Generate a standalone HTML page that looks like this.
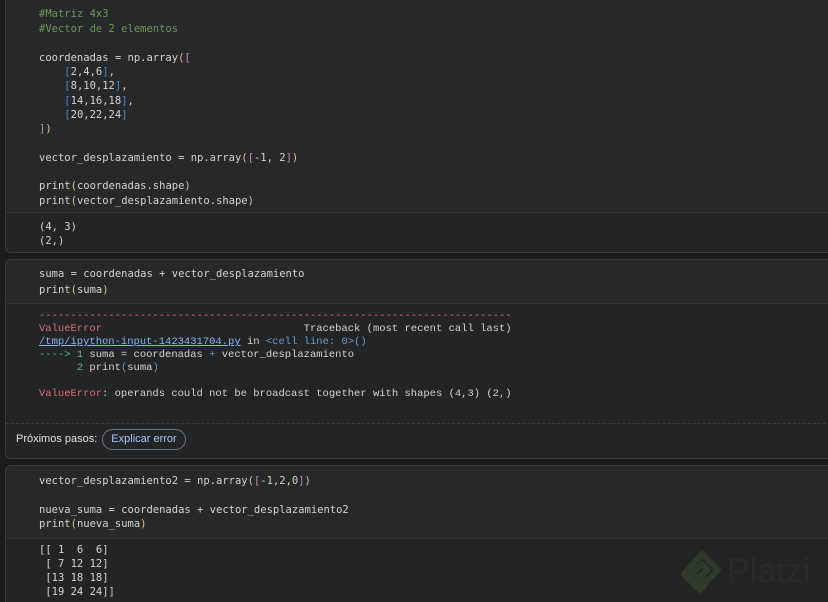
<!DOCTYPE html>
<html><head><style>
html,body{margin:0;width:828px;height:602px;overflow:hidden}
body{background:#1c1c1d;position:relative;font-family:"DejaVu Sans Mono",monospace;}
.cell{position:absolute;left:5px;width:840px;border:1px solid #3a3b3d;border-radius:6px;background:#232425;overflow:hidden}
.code{background:#27282a;border-bottom:1px solid #333436;position:relative}
.l{position:absolute;left:33px;font-size:10.5px;color:#d4d4d4;white-space:pre;line-height:14px}
.m{font-family:"Liberation Mono",monospace;font-size:10.5px}
.c{color:#6a9955}.y{color:#e5c07b}.p{color:#c586c0}.b{color:#3d8fd6}.n{color:#b5cea8}
.r{color:#e06c75}.g{color:#56b69a}.u{color:#8ab4f8;text-decoration:underline}.bl{color:#6c9bd2}
</style></head><body>
<div class="cell" style="top:-10px;height:261px">
<div class="code" style="height:221px">
<div class="l c" style="top:16px">#Matriz 4x3</div>
<div class="l c" style="top:31px">#Vector de 2 elementos</div>
<div class="l" style="top:60px">coordenadas = np.array<span class="y">(</span><span class="p">[</span></div>
<div class="l" style="top:74px">    <span class="b">[</span>2,4,6<span class="b">]</span>,</div>
<div class="l" style="top:88px">    <span class="b">[</span>8,10,12<span class="b">]</span>,</div>
<div class="l" style="top:103px">    <span class="b">[</span>14,16,18<span class="b">]</span>,</div>
<div class="l" style="top:117px">    <span class="b">[</span>20,22,24<span class="b">]</span></div>
<div class="l" style="top:131px"><span class="p">]</span><span class="y">)</span></div>
<div class="l" style="top:160px">vector_desplazamiento = np.array<span class="y">(</span><span class="p">[</span>-1, 2<span class="p">]</span><span class="y">)</span></div>
<div class="l" style="top:188px">print<span class="y">(</span>coordenadas.shape<span class="y">)</span></div>
<div class="l" style="top:203px">print<span class="y">(</span>vector_desplazamiento.shape<span class="y">)</span></div>
</div>
<div class="l" style="top:229px">(4, 3)</div>
<div class="l" style="top:243px">(2,)</div>
</div>

<div class="cell" style="top:259px;height:198px">
<div class="code" style="height:43px">
<div class="l" style="top:7px">suma = coordenadas + vector_desplazamiento</div>
<div class="l" style="top:23px">print<span class="y">(</span>suma<span class="y">)</span></div>
</div>
<div class="l m r" style="top:49px">---------------------------------------------------------------------------</div>
<div class="l m" style="top:62px"><span class="r">ValueError</span>                                Traceback (most recent call last)</div>
<div class="l m" style="top:75px"><span class="u">/tmp/ipython-input-1423431704.py</span> in <span class="bl">&lt;cell line: 0&gt;()</span></div>
<div class="l m" style="top:88px"><span class="g">----&gt; 1</span> suma = coordenadas <span class="bl">+</span> vector_desplazamiento</div>
<div class="l m" style="top:101px">      <span class="g">2</span> print<span class="bl">(</span>suma<span class="bl">)</span></div>
<div class="l m" style="top:127px"><span class="r">ValueError</span>: operands could not be broadcast together with shapes (4,3) (2,)</div>
<div style="position:absolute;top:163px;left:0;width:100%;border-top:1px dashed #3a3b3d"></div>
<div style="position:absolute;top:173px;left:10px;font-family:'Liberation Sans',sans-serif;font-size:11px;color:#e3e3e3">Próximos pasos:</div>
<div style="position:absolute;top:169px;left:96px;width:82px;height:19px;border:1px solid #6f7378;border-radius:11px;font-family:'Liberation Sans',sans-serif;font-size:11px;color:#a8c7fa;text-align:center;line-height:19px">Explicar error</div>
</div>

<div class="cell" style="top:465px;height:150px">
<div class="code" style="height:72px">
<div class="l" style="top:8px">vector_desplazamiento2 = np.array<span class="y">(</span><span class="p">[</span>-1,2,0<span class="p">]</span><span class="y">)</span></div>
<div class="l" style="top:37px">nueva_suma = coordenadas + vector_desplazamiento2</div>
<div class="l" style="top:51px">print<span class="y">(</span>nueva_suma<span class="y">)</span></div>
</div>
<div class="l" style="top:77px">[[ 1  6  6]</div>
<div class="l" style="top:91px"> [ 7 12 12]</div>
<div class="l" style="top:105px"> [13 18 18]</div>
<div class="l" style="top:119px"> [19 24 24]]</div>
</div>
<svg style="position:absolute;left:680px;top:548px" width="44" height="48"><path d="M22 6 L38 22 L26 34 L20 28 L28 22 L22 16 L12 26 L24 38 L20 42 L4 26 Z" fill="none" stroke="#2f3a2b" stroke-width="6" stroke-linejoin="round"/></svg>
<div style="position:absolute;left:727px;top:552px;font-family:'Liberation Sans',sans-serif;font-size:34px;color:#282a2b">Platzi</div>
</body></html>
